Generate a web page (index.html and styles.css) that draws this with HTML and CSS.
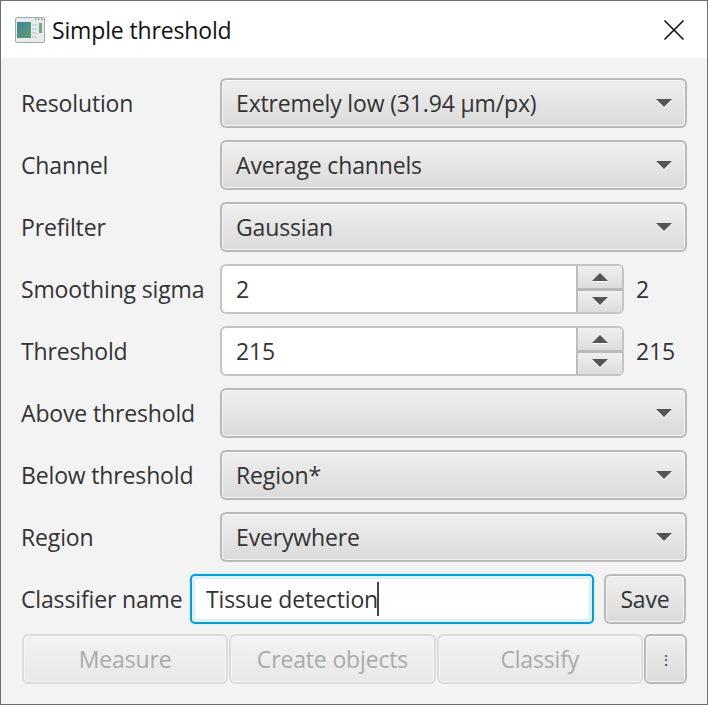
FILE: index.html
```html
<!DOCTYPE html>
<html>
<head>
  <title>Simple threshold</title>
  <link rel="stylesheet" href="styles.css">
</head>
<body>
  <div class="window">
    <div class="titlebar">
      <svg class="app-icon" width="30" height="26" viewBox="0 0 30 26">
        <defs>
          <linearGradient id="panelFill" x1="0" y1="0" x2="1" y2="1">
            <stop offset="0" stop-color="#3f7f9f"/>
            <stop offset="1" stop-color="#5ea266"/>
          </linearGradient>
        </defs>
        <rect x="0.5" y="0.5" width="29" height="25" rx="1.5" fill="#e8ebed" stroke="#a3a8ac"/>
        <rect x="20" y="1.5" width="1.5" height="1.5" fill="#8b9094"/>
        <rect x="23" y="1.5" width="1.5" height="1.5" fill="#8b9094"/>
        <rect x="26" y="1.5" width="1.5" height="1.5" fill="#8b9094"/>
        <rect x="2" y="5" width="14" height="16" fill="url(#panelFill)"/>
        <rect x="17" y="7" width="5" height="2" fill="#d2d6d9"/>
        <rect x="17" y="11" width="5" height="2" fill="#d2d6d9"/>
        <rect x="17" y="15" width="5" height="2" fill="#d2d6d9"/>
        <rect x="17" y="19" width="5" height="2" fill="#d2d6d9"/>
        <rect x="24" y="6" width="3" height="10" fill="#6bab7c"/>
      </svg>
      <span class="title">Simple threshold</span>
      <svg class="close-icon" width="22" height="22" viewBox="0 0 22 22">
        <path d="M1.5 1.5 L20.5 20.5 M20.5 1.5 L1.5 20.5" stroke="#111" stroke-width="1.6" fill="none"/>
      </svg>
    </div>

    <div class="content">
      <div class="row">
        <label class="field-label">Resolution</label>
        <div class="combo"><span>Extremely low (31.94 µm/px)</span><i class="arrow"></i></div>
      </div>
      <div class="row">
        <label class="field-label">Channel</label>
        <div class="combo"><span>Average channels</span><i class="arrow"></i></div>
      </div>
      <div class="row">
        <label class="field-label">Prefilter</label>
        <div class="combo"><span>Gaussian</span><i class="arrow"></i></div>
      </div>
      <div class="row">
        <label class="field-label">Smoothing sigma</label>
        <div class="spinner">
          <div class="spinner-text">2</div>
          <div class="spinner-buttons">
            <div class="spin-btn spin-up"><i class="arrow arrow-up"></i></div>
            <div class="spin-btn spin-down"><i class="arrow"></i></div>
          </div>
        </div>
        <span class="spin-value">2</span>
      </div>
      <div class="row">
        <label class="field-label">Threshold</label>
        <div class="spinner">
          <div class="spinner-text">215</div>
          <div class="spinner-buttons">
            <div class="spin-btn spin-up"><i class="arrow arrow-up"></i></div>
            <div class="spin-btn spin-down"><i class="arrow"></i></div>
          </div>
        </div>
        <span class="spin-value">215</span>
      </div>
      <div class="row">
        <label class="field-label">Above threshold</label>
        <div class="combo"><span></span><i class="arrow"></i></div>
      </div>
      <div class="row">
        <label class="field-label">Below threshold</label>
        <div class="combo"><span>Region*</span><i class="arrow"></i></div>
      </div>
      <div class="row">
        <label class="field-label">Region</label>
        <div class="combo"><span>Everywhere</span><i class="arrow"></i></div>
      </div>
      <div class="row name-row">
        <label class="name-label">Classifier name</label>
        <div class="name-field"><span>Tissue detection</span><i class="caret"></i></div>
        <button class="btn save-btn" type="button">Save</button>
      </div>
      <div class="action-row">
        <button class="btn btn-disabled" type="button" disabled>Measure</button>
        <button class="btn btn-disabled" type="button" disabled>Create objects</button>
        <button class="btn btn-disabled" type="button" disabled>Classify</button>
        <button class="btn more-btn" type="button">&#8942;</button>
      </div>
    </div>
  </div>
</body>
</html>
```

FILE: styles.css
```css
* {
  box-sizing: border-box;
}

body {
  margin: 0;
  background-color: #f3f3f3;
  font-family: "Open Sans", "Noto Sans", sans-serif;
  font-size: 23px;
  letter-spacing: -0.15px;
  color: #333;
}

.window {
  width: 708px;
  height: 705px;
  border: 1px solid #6e6e6e;
  background-color: #f3f3f3;
}

.titlebar {
  display: flex;
  align-items: center;
  height: 57px;
  padding: 0 22px 0 14px;
  background-color: #fff;
}

.app-icon {
  flex: none;
  margin-right: 7px;
}

.title {
  flex: 1;
  color: #111;
}

.content {
  padding: 20px 20px 0 21px;
}

.row {
  display: flex;
  align-items: center;
  height: 50px;
  margin-bottom: 12px;
}

.field-label {
  flex: none;
  width: 199px;
  margin-left: -1px;
  white-space: nowrap;
}

.combo {
  display: flex;
  flex: 1;
  align-items: center;
  justify-content: space-between;
  height: 50px;
  padding: 0 13px 0 14px;
  border: 2px solid #b9b9b9;
  border-radius: 6px;
  background: linear-gradient(#efefef, #dadada);
  box-shadow: inset 0 0 0 1px #f5f5f5;
}

.arrow {
  display: block;
  width: 0;
  height: 0;
  border-left: 8px solid transparent;
  border-right: 8px solid transparent;
  border-top: 8px solid #555;
  filter: drop-shadow(0 1px 0 #fff);
}

.arrow-up {
  border-top: none;
  border-bottom: 8px solid #555;
}

.spinner {
  display: flex;
  width: 404px;
  height: 50px;
  border: 2px solid #c4c4c4;
  border-radius: 6px;
  background-color: #fff;
}

.spinner-text {
  flex: 1;
  padding: 0 14px;
  line-height: 46px;
}

.spinner-buttons {
  display: flex;
  flex: none;
  flex-direction: column;
  width: 46px;
  border-left: 2px solid #bdbdbd;
}

.spin-btn {
  display: flex;
  flex: 1;
  align-items: center;
  justify-content: center;
  background: linear-gradient(#efefef, #dcdcdc);
}

.spin-up {
  border-bottom: 3px solid #b9b9b9;
  border-top-right-radius: 4px;
}

.spin-down {
  border-bottom-right-radius: 4px;
}

.spin-value {
  margin-left: 12px;
}

.name-label {
  flex: none;
  width: 169px;
  margin-left: -1px;
  white-space: nowrap;
}

.name-field {
  display: flex;
  align-items: center;
  width: 404px;
  height: 50px;
  padding: 0 14px;
  border: 2px solid #039ed3;
  border-radius: 5px;
  background-color: #fff;
  box-shadow: 0 0 0 2px #e3f2f8, inset 0 0 0 3px #dcf0f8;
}

.caret {
  display: block;
  width: 2px;
  height: 34px;
  margin-left: -1px;
  background-color: #444;
}

.btn {
  height: 50px;
  padding: 0;
  border: 2px solid #b9b9b9;
  border-radius: 6px;
  background: linear-gradient(#efefef, #dadada);
  box-shadow: inset 0 0 0 1px #f5f5f5;
  color: #333;
  font-family: inherit;
  font-size: 23px;
  letter-spacing: -0.15px;
}

.save-btn {
  flex: none;
  width: 82px;
  margin-left: 10px;
}

.action-row {
  display: flex;
  margin-top: -2px;
  height: 50px;
}

.btn-disabled {
  flex: 1;
  margin-right: 1px;
  border-color: #dcdcdc;
  background: linear-gradient(#f2f2f2, #e8e8e8);
  color: #aaa;
}

.more-btn {
  flex: none;
  width: 43px;
  font-size: 14px;
}
```
